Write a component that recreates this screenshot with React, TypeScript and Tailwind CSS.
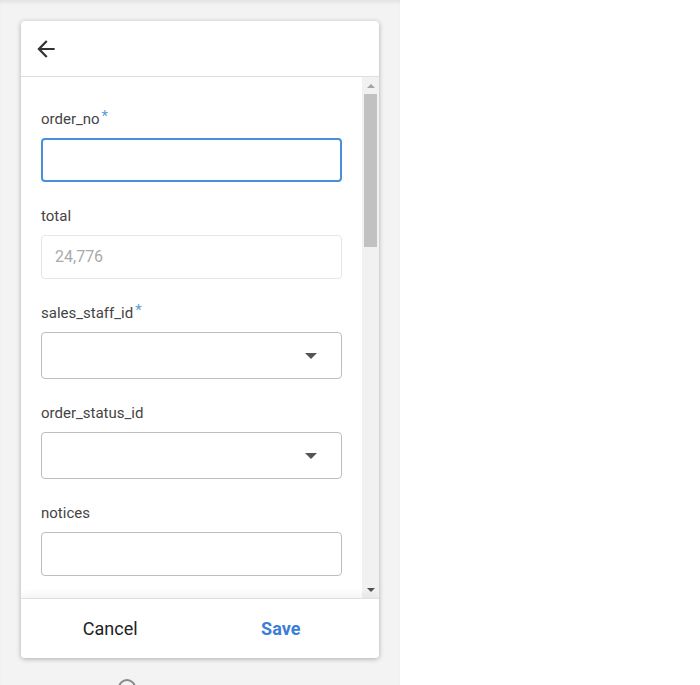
import React from 'react';

function Caret() {
  return (
    <svg width="12" height="6" viewBox="0 0 12 6" className="shrink-0">
      <path d="M0 0h12L6 6z" fill="#555" />
    </svg>
  );
}

function Label({ text, required }: { text: string; required?: boolean }) {
  return (
    <div className="h-5 mb-[9px] text-[15px] leading-5 text-[#444]">
      {text}
      {required && <span className="text-[#5b9bd5] ml-[2px] relative -top-[3px]">*</span>}
    </div>
  );
}

export default function App() {
  return (
    <div className="w-[700px] h-[685px] overflow-hidden bg-white flex" style={{ fontFamily: 'Roboto, "Liberation Sans", sans-serif' }}>
      <div className="w-[400px] h-full bg-[#f3f3f3] shadow-[inset_0_4px_4px_-2px_rgba(0,0,0,0.08)] pt-[21px] pl-[21px] flex flex-col">
        <div className="w-[358px] h-[637px] shrink-0 bg-white rounded-[4px] shadow-[0_1px_5px_rgba(0,0,0,0.3)] flex flex-col overflow-hidden">
          <div className="h-[56px] shrink-0 border-b border-[#dedede] flex items-center pl-[12px]">
            <svg width="26" height="26" viewBox="0 0 24 24">
              <path d="M20 11H7.83l5.59-5.59L12 4l-8 8 8 8 1.41-1.41L7.83 13H20v-2z" fill="#333" />
            </svg>
          </div>

          <div className="flex-1 flex min-h-0">
            <div className="flex-1 overflow-hidden px-5 pt-[32px]">
              <Label text="order_no" required />
              <div className="h-[44px] rounded-[4px] border-2 border-[#4a90d9] mb-6" />

              <Label text="total" />
              <div className="h-[44px] rounded-[4px] border border-[#e6e6e6] flex items-center px-[13px] text-[16px] text-[#aaa] mb-6">
                24,776
              </div>

              <Label text="sales_staff_id" required />
              <div className="h-[47px] rounded-[4px] border border-[#bdbdbd] flex items-center justify-end pr-[24px] mb-6">
                <Caret />
              </div>

              <Label text="order_status_id" />
              <div className="h-[47px] rounded-[4px] border border-[#bdbdbd] flex items-center justify-end pr-[24px] mb-6">
                <Caret />
              </div>

              <Label text="notices" />
              <div className="h-[44px] rounded-[4px] border border-[#bdbdbd] mb-6" />
            </div>

            <div className="w-[17px] shrink-0 bg-[#f1f1f1] flex flex-col items-center">
              <div className="h-[17px] flex items-center justify-center">
                <svg width="8" height="4" viewBox="0 0 8 4"><path d="M0 4h8L4 0z" fill="#a3a3a3" /></svg>
              </div>
              <div className="w-[13px] h-[153px] bg-[#c1c1c1]" />
              <div className="flex-1" />
              <div className="h-[17px] flex items-center justify-center">
                <svg width="8" height="4" viewBox="0 0 8 4"><path d="M0 0h8L4 4z" fill="#505050" /></svg>
              </div>
            </div>
          </div>

          <div className="h-[60px] shrink-0 relative z-10 border-t border-[#e0e0e0] bg-white shadow-[0_-4px_8px_rgba(0,0,0,0.05)] flex pl-[4px] pr-[13px]">
            <button className="flex-1 text-[18px] text-[#222]">Cancel</button>
            <button className="flex-1 text-[18px] font-bold text-[#3b7dd8]">Save</button>
          </div>
        </div>
        <div className="mt-[21px] ml-[97px] w-[18px] h-[18px] shrink-0 rounded-full border-2 border-[#888]" />
      </div>
      <div className="flex-1" />
    </div>
  );
}
